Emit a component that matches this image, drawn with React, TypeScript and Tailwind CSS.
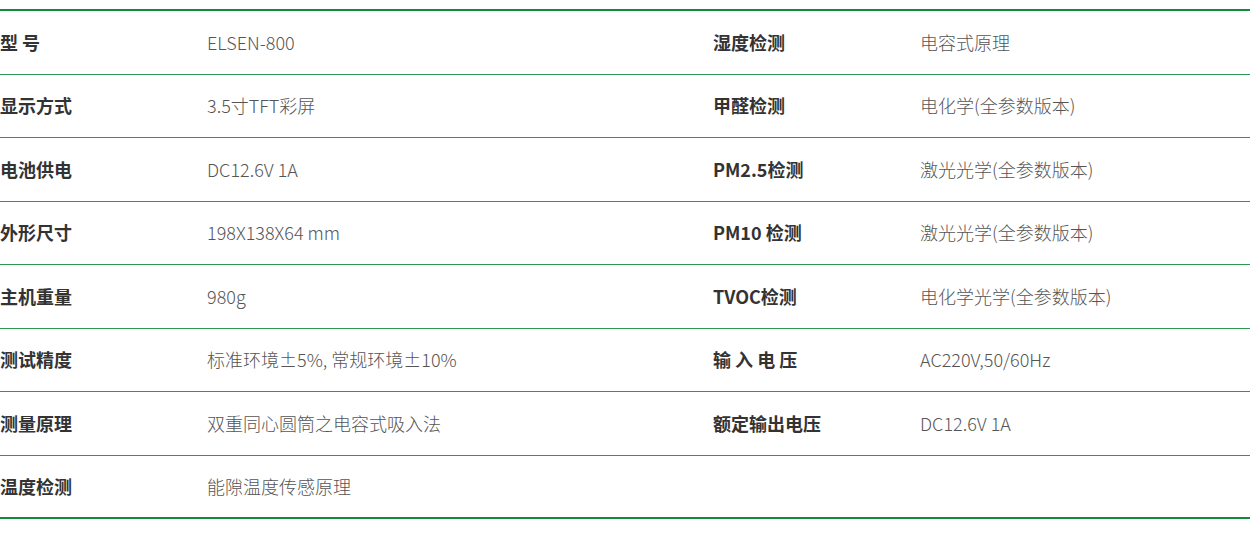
const rows: [string, string, string, string][] = [
  ["型 号", "ELSEN-800", "湿度检测", "电容式原理"],
  ["显示方式", "3.5寸TFT彩屏", "甲醛检测", "电化学(全参数版本)"],
  ["电池供电", "DC12.6V 1A", "PM2.5检测", "激光光学(全参数版本)"],
  ["外形尺寸", "198X138X64 mm", "PM10 检测", "激光光学(全参数版本)"],
  ["主机重量", "980g", "TVOC检测", "电化学光学(全参数版本)"],
  ["测试精度", "标准环境±5%, 常规环境±10%", "输 入 电 压", "AC220V,50/60Hz"],
  ["测量原理", "双重同心圆筒之电容式吸入法", "额定输出电压", "DC12.6V 1A"],
  ["温度检测", "能隙温度传感原理", "", ""],
];

export default function App() {
  return (
    <div className="bg-white w-[1252px] h-[545px] pt-[9px] font-['Noto_Sans_CJK_SC','Noto_Sans',sans-serif]">
      <div className="w-[1250px] border-t-2 border-[#13893b]">
        {rows.map((r, i) => (
          <div
            key={i}
            className={`grid grid-cols-[207px_506px_207px_1fr] items-center h-[63.5px] ${
              i === rows.length - 1
                ? "border-b-2 border-[#13893b]"
                : "border-b border-[#2a9a52]"
            }`}
          >
            <span className="text-[18px] font-bold text-[#333]">{r[0]}</span>
            <span className="text-[18px] font-light text-[#555]">{r[1]}</span>
            <span className="text-[18px] font-bold text-[#333]">{r[2]}</span>
            <span className="text-[18px] font-light text-[#555]">{r[3]}</span>
          </div>
        ))}
      </div>
    </div>
  );
}
